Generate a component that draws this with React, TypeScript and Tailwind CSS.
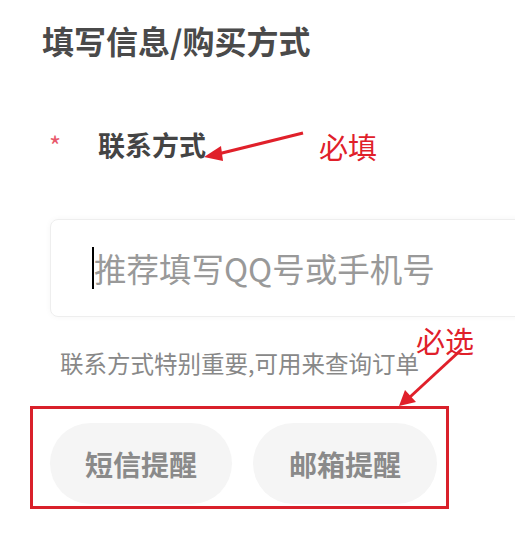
export default function App() {
  return (
    <div className="relative w-[515px] h-[535px] overflow-hidden bg-white font-['Noto_Sans_CJK_SC','Noto_Sans',sans-serif]">
      {/* 标题 */}
      <h1 className="pl-[42px] pt-[20px] text-[32px] leading-[40px] font-bold text-[#4a4a4a]">
        填写信息/购买方式
      </h1>

      {/* 联系方式 */}
      <div className="mt-[70px] flex items-center h-[30px]">
        <span className="ml-[49px] w-[49px] text-[26px] leading-[30px] text-[#e8596b]">*</span>
        <span className="text-[27px] leading-[30px] font-bold text-[#444]">联系方式</span>
      </div>

      <div className="ml-[50px] mt-[59px] h-[98px] w-[520px] rounded-lg border border-[#eeeeee] shadow-[0_0_6px_rgba(0,0,0,0.04)] flex items-center pl-[41px]">
        <span className="w-[2px] h-[42px] bg-black" />
        <span className="text-[32.5px] leading-[40px] text-[#999]">推荐填写QQ号或手机号</span>
      </div>

      <p className="ml-[60px] mt-[31px] text-[23.5px] leading-[30px] text-[#888]">
        联系方式特别重要,可用来查询订单
      </p>

      {/* 提醒方式 */}
      <div className="ml-[30px] mt-[28px] w-[419px] h-[103px] border-[3px] border-[#d9202a] flex items-start gap-[21px] pl-[17px] pt-[14px]">
        <button className="w-[182px] h-[81px] rounded-full bg-[#f5f5f5] text-[28px] font-bold text-[#8a8a8a]">
          短信提醒
        </button>
        <button className="w-[184px] h-[81px] rounded-full bg-[#f5f5f5] text-[28px] font-bold text-[#8a8a8a]">
          邮箱提醒
        </button>
      </div>

      {/* 标注 */}
      <span className="absolute left-[319px] top-[128px] text-[29px] leading-[36px] text-[#e0202a]">必填</span>
      <span className="absolute left-[416px] top-[322px] text-[29px] leading-[36px] text-[#e0202a]">必选</span>
      <svg className="absolute inset-0 pointer-events-none" width="515" height="535">
        <line x1="303" y1="133" x2="218" y2="154" stroke="#e0202a" strokeWidth="3" />
        <polygon points="204,157 221,146 223,161" fill="#e0202a" />
        <line x1="462" y1="349" x2="410" y2="397" stroke="#e0202a" strokeWidth="3" />
        <polygon points="399,406 405,390 416,402" fill="#e0202a" />
      </svg>
    </div>
  );
}
